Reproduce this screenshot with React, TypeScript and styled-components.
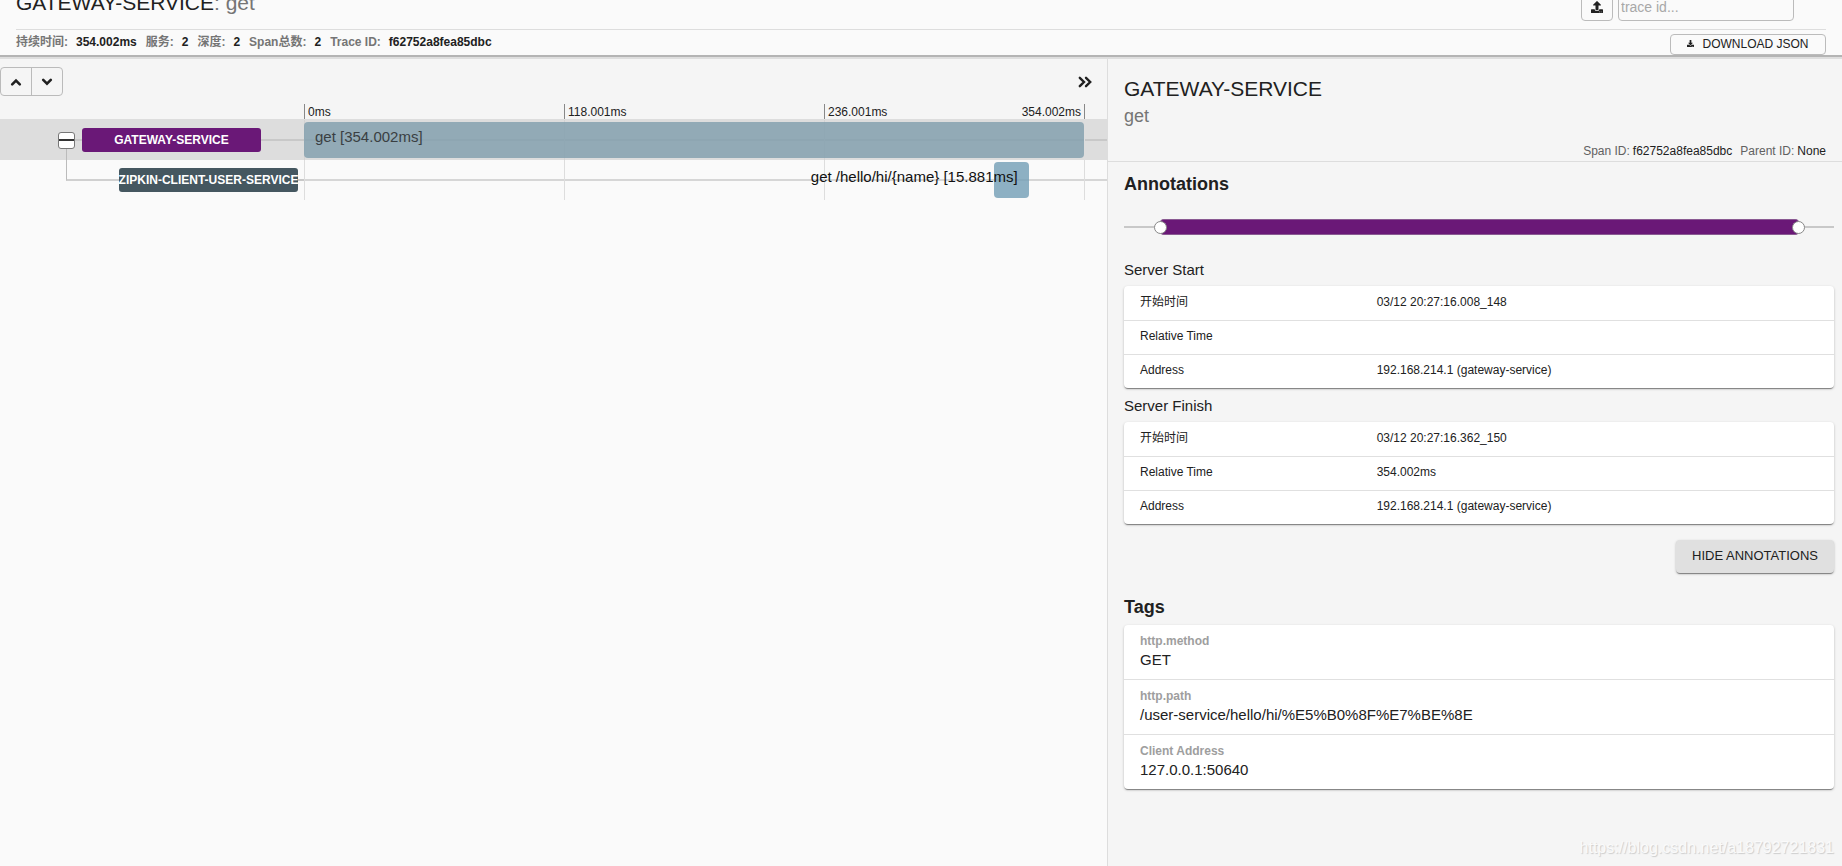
import React from 'react';
import styled, { createGlobalStyle } from 'styled-components';
import { FaDownload, FaUpload } from 'react-icons/fa';

const color = {
  text: '#212121',
  muted: '#757575',
  faint: '#9e9e9e',
  page: '#fafafa',
  panel: '#f5f5f5',
  divider: '#dddddd',
  outline: '#bbbbbb',
  track: '#c8c8c8',
  purple: '#6a1877',
  slate: '#455760',
};

const cardShadow =
  '0 1px 3px rgba(0, 0, 0, 0.2), 0 1px 1px rgba(0, 0, 0, 0.14), 0 2px 1px -1px rgba(0, 0, 0, 0.3)';

const GlobalStyle = createGlobalStyle`
  *, *::before, *::after { box-sizing: border-box; }
  body {
    margin: 0;
    background: ${color.page};
    color: ${color.text};
    font-family: "Liberation Sans", "Noto Sans CJK SC", sans-serif;
    font-size: 12px;
    line-height: 16px;
  }
  button, input { font: inherit; color: inherit; }
  h1, h2, h3, h4, p, dl, dd { margin: 0; font-weight: normal; }
`;

const Page = styled.div`
  display: flex;
  flex-direction: column;
  min-height: 100vh;
  overflow: hidden;
`;

const Header = styled.header`
  position: relative;
  margin-top: -23px;
  padding: 0 16px;
  background: ${color.page};
  border-bottom: 2px solid #b4b4b4;
  box-shadow: 0 2px 0 #dedede;
`;

const TitleRow = styled.div`
  display: flex;
  align-items: center;
  justify-content: space-between;
  height: 53px;
  border-bottom: 1px solid ${color.divider};
`;

const Title = styled.h1`
  font-size: 21px;
  line-height: 24px;
`;

const TitleSpan = styled.span`
  color: ${color.muted};
`;

const SearchGroup = styled.div`
  display: flex;
  gap: 5px;
  padding-right: 32px;
`;

const OutlineButton = styled.button`
  display: flex;
  align-items: center;
  justify-content: center;
  padding: 0;
  background: transparent;
  border: 1px solid ${color.outline};
  border-radius: 4px;
  cursor: pointer;
`;

const UploadButton = styled(OutlineButton)`
  width: 32px;
  height: 36px;
  padding-top: 8px;
`;

const DownloadButton = styled(OutlineButton)`
  gap: 8px;
  width: 156px;
  height: 21px;
  padding-bottom: 2px;
`;

const TraceInput = styled.input`
  width: 176px;
  height: 36px;
  padding: 7px 2px 0;
  background: transparent;
  border: 1px solid ${color.outline};
  border-radius: 4px;
  font-size: 14px;
  &::placeholder { color: #a8a8a8; opacity: 1; }
`;

const MetaRow = styled.div`
  display: flex;
  align-items: flex-end;
  justify-content: space-between;
  height: 25px;
`;

const MetaList = styled.dl`
  display: flex;
  gap: 9px;
  padding-bottom: 5px;
  font-weight: bold;
`;

const MetaItem = styled.div`
  display: flex;
  gap: 8px;
`;

const MetaLabel = styled.dt`
  color: ${color.muted};
`;

const MetaValue = styled.dd`
  font-weight: bold;
`;

const Main = styled.main`
  display: grid;
  grid-template-columns: minmax(0, 1107fr) minmax(0, 735fr);
  flex: 1;
`;

const TimelinePane = styled.section`
  min-width: 0;
  padding-top: 2px;
  background: linear-gradient(${color.panel}, ${color.panel}) 0 0 / 100% 62px no-repeat;
`;

const Toolbar = styled.div`
  display: flex;
  align-items: center;
  justify-content: space-between;
  padding: 8px 15px 0 0;
`;

const ButtonGroup = styled.div`
  display: flex;
  border: 1px solid ${color.outline};
  border-radius: 4px;
`;

const GroupButton = styled.button`
  display: flex;
  align-items: center;
  justify-content: center;
  width: 30px;
  height: 27px;
  padding: 0;
  background: transparent;
  border: 0;
  cursor: pointer;
  & + & {
    width: 31px;
    border-left: 1px solid ${color.outline};
  }
`;

const CollapseButton = styled.button`
  display: flex;
  align-items: center;
  padding: 0;
  background: transparent;
  border: 0;
  cursor: pointer;
`;

const timelineColumns = '304px minmax(0, 1fr) 22px';

const TimeScale = styled.div`
  display: grid;
  grid-template-columns: ${timelineColumns};
  padding-top: 8px;
  border-bottom: 1px solid ${color.divider};
`;

const Ticks = styled.div`
  display: grid;
  grid-template-columns: repeat(3, 1fr);
  grid-column: 2;
  border-right: 1px solid #888888;
`;

const Tick = styled.div`
  display: flex;
  justify-content: space-between;
  height: 15px;
  padding: 0 3px;
  border-left: 1px solid #888888;
`;

const SpanRow = styled.div<{ $active?: boolean }>`
  display: grid;
  grid-template-columns: ${timelineColumns};
  height: 40px;
  background:
    linear-gradient(${({ $active }) => ($active ? '#c8c8c8' : '#d6d6d6')} 0 0) 304px 19px / 100% 2px no-repeat,
    ${({ $active }) => ($active ? color.divider : color.page)};
`;

const TreeCell = styled.div<{ $indent: number }>`
  display: flex;
  align-items: center;
  padding-left: ${({ $indent }) => $indent}px;
`;

const Toggle = styled.button`
  position: relative;
  display: flex;
  align-items: center;
  width: 17px;
  height: 17px;
  padding: 0;
  background: #ffffff;
  border: 1px solid #777777;
  border-radius: 3px;
  cursor: pointer;
  &::before {
    content: '';
    width: 100%;
    height: 2px;
    background: #333333;
  }
  &::after {
    content: '';
    position: absolute;
    top: 16px;
    left: 7px;
    width: 1px;
    height: 12px;
    background: #bbbbbb;
  }
`;

const Dash = styled.span<{ $width?: number }>`
  flex: ${({ $width }) => ($width ? `0 0 ${$width}px` : '1')};
  height: 2px;
  background: ${color.track};
`;

const Elbow = styled.span`
  align-self: flex-start;
  width: 53px;
  height: 21px;
  border-left: 1px solid #bbbbbb;
  border-bottom: 2px solid #d0d0d0;
`;

const ServiceLabel = styled.span<{ $color: string }>`
  display: flex;
  align-items: center;
  justify-content: center;
  width: 179px;
  height: 24px;
  overflow: hidden;
  background: ${({ $color }) => $color};
  border-radius: 3px;
  color: #ffffff;
  font-weight: bold;
  white-space: nowrap;
`;

const Lane = styled.div`
  position: relative;
  display: grid;
  grid-template-columns: repeat(3, 1fr);
  border-right: 1px solid ${color.divider};
`;

const Segment = styled.span<{ $active?: boolean }>`
  border-left: 1px solid ${({ $active }) => ($active ? '#d2d2d2' : '#dddddd')};
`;

const Bar = styled.div<{ $active?: boolean }>`
  position: absolute;
  top: 2px;
  bottom: 2px;
  display: flex;
  justify-content: ${({ $active }) => ($active ? 'flex-start' : 'flex-end')};
  padding: 6px 11px;
  background: ${({ $active }) => ($active ? 'rgba(127, 158, 172, 0.8)' : 'rgba(114, 158, 181, 0.8)')};
  border-radius: 4px;
  color: ${({ $active }) => ($active ? '#3a3f42' : '#111111')};
  font-size: 15px;
  line-height: 18px;
  white-space: nowrap;
`;

const DetailPane = styled.aside`
  display: flex;
  flex-direction: column;
  padding-top: 2px;
  background: ${color.panel};
  border-left: 1px solid ${color.divider};
`;

const DetailHeader = styled.div`
  padding: 16px 16px 2px;
  border-bottom: 1px solid ${color.divider};
`;

const DetailTitle = styled.h2`
  font-size: 21px;
  line-height: 28px;
`;

const DetailSubtitle = styled.p`
  color: ${color.muted};
  font-size: 18px;
  line-height: 26px;
`;

const IdList = styled.dl`
  display: flex;
  justify-content: flex-end;
  gap: 8px;
  padding-top: 14px;
`;

const IdItem = styled.div`
  display: flex;
  gap: 3px;
`;

const IdLabel = styled.dt`
  color: #616161;
`;

const DetailBody = styled.div`
  flex: 1;
  padding: 10px 8px 8px 16px;
`;

const SectionTitle = styled.h3`
  font-size: 18px;
  font-weight: bold;
  line-height: 24px;
`;

const AnnotationTrack = styled.div`
  display: flex;
  align-items: center;
  height: 16px;
  margin: 23px 0 17px;
  background: linear-gradient(${color.track} 0 0) 0 7px / 100% 2px no-repeat;
`;

const AnnotationBar = styled.div`
  display: flex;
  align-items: center;
  justify-content: space-between;
  width: 90%;
  height: 16px;
  margin: 0 auto;
  background: ${color.purple};
  border: solid #8a5a92;
  border-width: 1px 0;
  border-radius: 4px;
`;

const AnnotationPoint = styled.button`
  width: 13px;
  height: 13px;
  margin: 0 -6px;
  padding: 0;
  background: #ffffff;
  border: 1px solid #888888;
  border-radius: 50%;
  cursor: pointer;
`;

const AnnotationTitle = styled.h4`
  padding: 6px 0 4px;
  font-size: 15px;
  line-height: 24px;
`;

const Card = styled.div`
  background: #ffffff;
  border-radius: 4px;
  box-shadow: ${cardShadow};
`;

const Table = styled.table`
  width: 100%;
  border-collapse: collapse;
  table-layout: fixed;
`;

const TableRow = styled.tr`
  height: 34px;
  & + & { border-top: 1px solid #e0e0e0; }
`;

const NameCell = styled.th`
  width: 33.33%;
  padding: 0 16px 2px;
  font-weight: normal;
  text-align: left;
`;

const ValueCell = styled.td`
  padding: 0 16px 2px;
`;

const Actions = styled.div`
  display: flex;
  justify-content: flex-end;
  padding: 16px 0 22px;
`;

const RaisedButton = styled.button`
  height: 33px;
  padding: 0 16px 1px;
  background: #e0e0e0;
  border: 0;
  border-radius: 4px;
  box-shadow: ${cardShadow};
  font-size: 13px;
  cursor: pointer;
`;

const TagList = styled.dl`
  margin-top: 6px;
  background: #ffffff;
  border-radius: 4px;
  box-shadow: ${cardShadow};
`;

const TagItem = styled.div`
  padding: 8px 16px;
  & + & { border-top: 1px solid #e0e0e0; }
`;

const TagKey = styled.dt`
  color: ${color.faint};
  font-weight: bold;
`;

const TagValue = styled.dd`
  font-size: 15px;
  line-height: 22px;
`;

const Watermark = styled.p`
  padding: 0 8px 7px;
  color: #fafafa;
  font-size: 16px;
  line-height: 22px;
  text-align: right;
  text-shadow: 1px 1px 1px #cccccc;
`;

const meta = [
  ['持续时间:', '354.002ms'],
  ['服务:', '2'],
  ['深度:', '2'],
  ['Span总数:', '2'],
  ['Trace ID:', 'f62752a8fea85dbc'],
];

const total = 354.002;

const annotations = [
  {
    title: 'Server Start',
    rows: [
      ['开始时间', '03/12 20:27:16.008_148'],
      ['Relative Time', ''],
      ['Address', '192.168.214.1 (gateway-service)'],
    ],
  },
  {
    title: 'Server Finish',
    rows: [
      ['开始时间', '03/12 20:27:16.362_150'],
      ['Relative Time', '354.002ms'],
      ['Address', '192.168.214.1 (gateway-service)'],
    ],
  },
];

const tags = [
  ['http.method', 'GET'],
  ['http.path', '/user-service/hello/hi/%E5%B0%8F%E7%BE%8E'],
  ['Client Address', '127.0.0.1:50640'],
];

const chevrons = {
  up: 'M2.2 8.4 6 4.6l3.8 3.8',
  down: 'M2.2 3.8 6 7.6l3.8-3.8',
};

function Chevron({ direction }: { direction: keyof typeof chevrons }) {
  return (
    <svg width="12" height="12" viewBox="0 0 12 12" aria-hidden="true">
      <path
        d={chevrons[direction]}
        fill="none"
        stroke="currentColor"
        strokeWidth="2.6"
        strokeLinecap="round"
      />
    </svg>
  );
}

function DoubleChevron() {
  return (
    <svg width="14" height="12" viewBox="0 0 14 12" aria-hidden="true">
      <path
        d="M1.8 1.8 6 6l-4.200 4.200M8 1.8 12.200 6 8 10.200"
        fill="none"
        stroke="currentColor"
        strokeWidth="2.400"
        strokeLinecap="round"
      />
    </svg>
  );
}

type SpanBarProps = { start: number; duration: number; label: string; active?: boolean };

function SpanBar({ start, duration, label, active }: SpanBarProps) {
  return (
    <Lane>
      <Segment $active={active} />
      <Segment $active={active} />
      <Segment $active={active} />
      <Bar
        $active={active}
        style={{ left: `${(start / total) * 100}%`, width: `${(duration / total) * 100}%` }}
      >
        {label}
      </Bar>
    </Lane>
  );
}

export default function App() {
  return (
    <Page>
      <GlobalStyle />
      <Header>
        <TitleRow>
          <Title>
            GATEWAY-SERVICE<TitleSpan>: get</TitleSpan>
          </Title>
          <SearchGroup>
            <UploadButton aria-label="Upload trace">
              <FaUpload size={12} />
            </UploadButton>
            <TraceInput aria-label="Trace id" placeholder="trace id..." />
          </SearchGroup>
        </TitleRow>
        <MetaRow>
          <MetaList>
            {meta.map(([label, value]) => (
              <MetaItem key={label}>
                <MetaLabel>{label}</MetaLabel>
                <MetaValue>{value}</MetaValue>
              </MetaItem>
            ))}
          </MetaList>
          <DownloadButton>
            <FaDownload size={7} />
            DOWNLOAD JSON
          </DownloadButton>
        </MetaRow>
      </Header>
      <Main>
        <TimelinePane>
          <Toolbar>
            <ButtonGroup>
              <GroupButton aria-label="Previous span">
                <Chevron direction="up" />
              </GroupButton>
              <GroupButton aria-label="Next span">
                <Chevron direction="down" />
              </GroupButton>
            </ButtonGroup>
            <CollapseButton aria-label="Collapse detail">
              <DoubleChevron />
            </CollapseButton>
          </Toolbar>
          <TimeScale>
            <Ticks>
              <Tick>0ms</Tick>
              <Tick>118.001ms</Tick>
              <Tick>
                <span>236.001ms</span>
                <span>354.002ms</span>
              </Tick>
            </Ticks>
          </TimeScale>
          <SpanRow $active>
            <TreeCell $indent={58}>
              <Toggle aria-label="Collapse children" />
              <Dash $width={7} />
              <ServiceLabel $color={color.purple}>GATEWAY-SERVICE</ServiceLabel>
              <Dash />
            </TreeCell>
            <SpanBar active start={0} duration={total} label="get [354.002ms]" />
          </SpanRow>
          <SpanRow>
            <TreeCell $indent={66}>
              <Elbow />
              <ServiceLabel $color={color.slate}>ZIPKIN-CLIENT-USER-SERVICE</ServiceLabel>
              <Dash />
            </TreeCell>
            <SpanBar start={313} duration={15.881} label="get /hello/hi/{name} [15.881ms]" />
          </SpanRow>
        </TimelinePane>
        <DetailPane>
          <DetailHeader>
            <DetailTitle>GATEWAY-SERVICE</DetailTitle>
            <DetailSubtitle>get</DetailSubtitle>
            <IdList>
              <IdItem>
                <IdLabel>Span ID:</IdLabel>
                <dd>f62752a8fea85dbc</dd>
              </IdItem>
              <IdItem>
                <IdLabel>Parent ID:</IdLabel>
                <dd>None</dd>
              </IdItem>
            </IdList>
          </DetailHeader>
          <DetailBody>
            <SectionTitle>Annotations</SectionTitle>
            <AnnotationTrack>
              <AnnotationBar>
                <AnnotationPoint aria-label="Server Start" />
                <AnnotationPoint aria-label="Server Finish" />
              </AnnotationBar>
            </AnnotationTrack>
            {annotations.map(({ title, rows }) => (
              <React.Fragment key={title}>
                <AnnotationTitle>{title}</AnnotationTitle>
                <Card>
                  <Table>
                    <tbody>
                      {rows.map(([name, value]) => (
                        <TableRow key={name}>
                          <NameCell scope="row">{name}</NameCell>
                          <ValueCell>{value}</ValueCell>
                        </TableRow>
                      ))}
                    </tbody>
                  </Table>
                </Card>
              </React.Fragment>
            ))}
            <Actions>
              <RaisedButton>HIDE ANNOTATIONS</RaisedButton>
            </Actions>
            <SectionTitle>Tags</SectionTitle>
            <TagList>
              {tags.map(([key, value]) => (
                <TagItem key={key}>
                  <TagKey>{key}</TagKey>
                  <TagValue>{value}</TagValue>
                </TagItem>
              ))}
            </TagList>
          </DetailBody>
          <Watermark>https://blog.csdn.net/a18792721831</Watermark>
        </DetailPane>
      </Main>
    </Page>
  );
}
